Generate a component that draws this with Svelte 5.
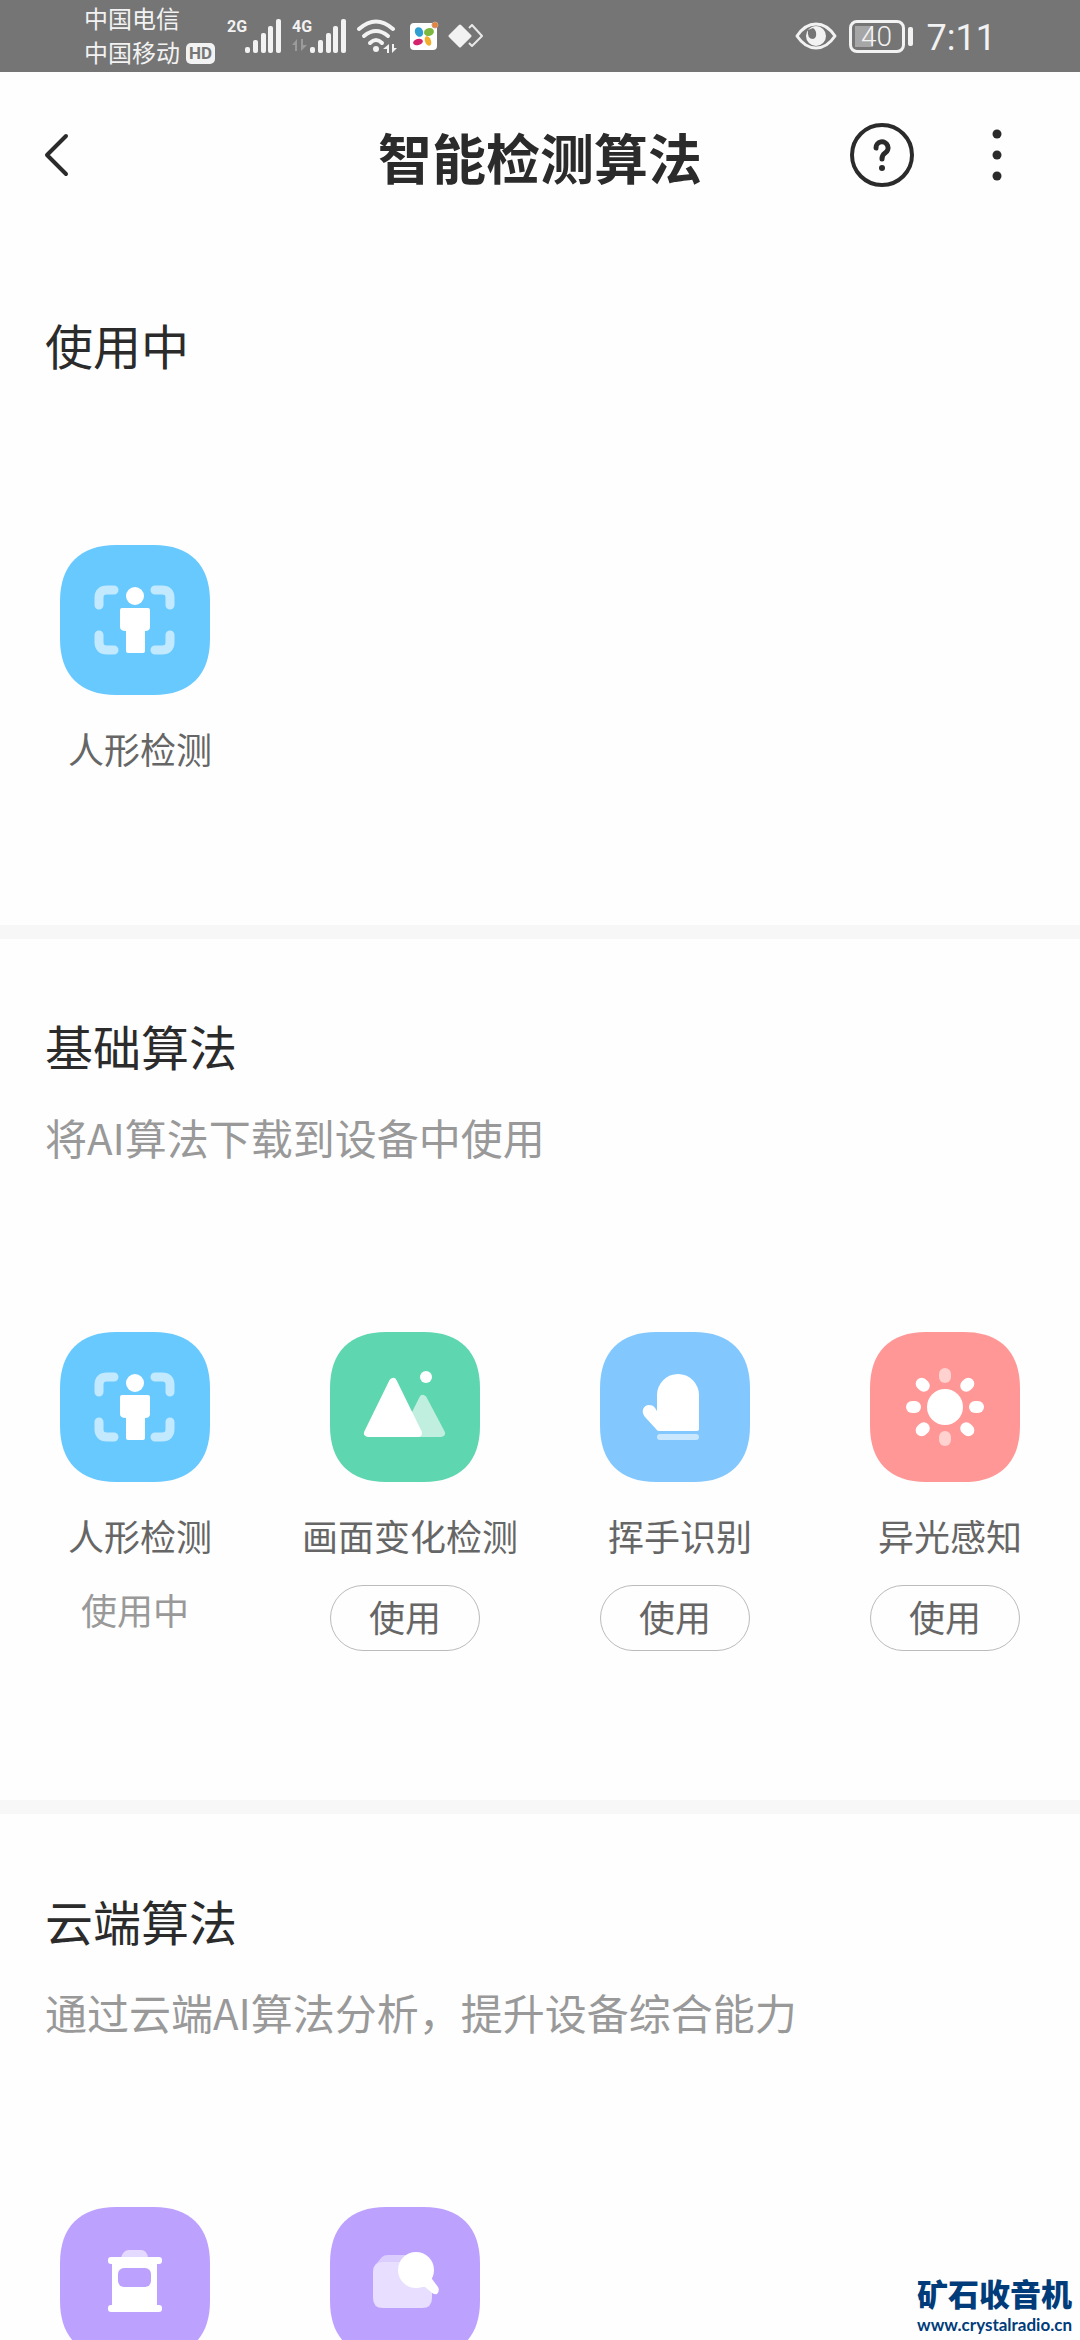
<script>
  const sections = [
    {
      title: '使用中',
      items: [{ icon: 'person', label: '人形检测' }]
    },
    {
      title: '基础算法',
      desc: '将AI算法下载到设备中使用',
      items: [
        { icon: 'person', label: '人形检测', state: '使用中' },
        { icon: 'scene', label: '画面变化检测', action: '使用' },
        { icon: 'mitten', label: '挥手识别', action: '使用' },
        { icon: 'sun', label: '异光感知', action: '使用' }
      ]
    },
    {
      title: '云端算法',
      desc: '通过云端AI算法分析，提升设备综合能力',
      items: [{ icon: 'bin' }, { icon: 'search' }]
    }
  ];

  const rays = [0, 45, 90, 135, 180, 225, 270, 315];
</script>

{#snippet signal()}
  <svg class="bars" width="37" height="34" viewBox="0 0 37 34" aria-hidden="true">
    <g fill="#f2f2f2">
      <rect x="0" y="28" width="5" height="6" rx="2" />
      <rect x="8" y="21" width="5" height="13" rx="2" />
      <rect x="16" y="14" width="5" height="20" rx="2" />
      <rect x="23" y="7" width="5" height="27" rx="2" />
      <rect x="31" y="0" width="5" height="34" rx="2" />
    </g>
  </svg>
{/snippet}

{#snippet tile(icon)}
  <svg class="tile {icon}" viewBox="0 0 150 150" aria-hidden="true">
    <path
      class="plate"
      d="M0 56C0 20 20 0 56 0H94C130 0 150 20 150 56V94C150 130 130 150 94 150H56C20 150 0 130 0 94Z"
    />
    {#if icon === 'person'}
      <g fill="none" stroke="#c3e9ff" stroke-width="9" stroke-linecap="round">
        <path d="M39 60V53Q39 45 47 45H54" />
        <path d="M95 45H102Q110 45 110 53V60" />
        <path d="M39 90V97Q39 105 47 105H54" />
        <path d="M95 105H102Q110 105 110 97V90" />
      </g>
      <circle cx="75" cy="51" r="9" fill="#fff" />
      <path
        fill="#fff"
        d="M62 63H88Q90 63 90 65V82Q90 86 85 86V106Q85 108 83 108H68Q66 108 66 106V86Q60 86 60 82V65Q60 63 62 63Z"
      />
    {:else if icon === 'scene'}
      <path d="M93 67L111 101H76Z" fill="#c0eedf" stroke="#c0eedf" stroke-width="8" stroke-linejoin="round" />
      <path d="M63 50L38 101H88Z" fill="#fff" stroke="#fff" stroke-width="8" stroke-linejoin="round" />
      <circle cx="96" cy="45" r="6" fill="#fff" />
    {:else if icon === 'mitten'}
      <path
        fill="#fff"
        d="M57 63A21 21 0 0 1 99 63V97Q99 99 97 99H59Q57 99 56 97L45 85C40 79 44 73 49 73C54 73 55 76 57 79Z"
      />
      <rect x="57" y="102" width="42" height="6" rx="3" fill="#c9e7ff" />
    {:else if icon === 'sun'}
      <circle cx="75" cy="75" r="18" fill="#fff" />
      {#each rays as angle}
        <rect
          x="69"
          y="36"
          width="12"
          height="15"
          rx="6"
          fill={angle % 180 === 0 ? '#ffd2d0' : '#fff'}
          transform="rotate({angle} 75 75)"
        />
      {/each}
    {:else if icon === 'bin'}
      <path d="M61 51Q63 43 69 43H81Q87 43 88 51Z" fill="#e4d9ff" />
      <rect x="48" y="50" width="54" height="7" rx="3" fill="#fff" />
      <rect x="48" y="98" width="54" height="7" rx="3" fill="#fff" />
      <rect x="52" y="53" width="45" height="50" fill="#fff" />
      <rect x="58" y="61" width="33" height="19" rx="6" fill="#bda1ff" />
    {:else}
      <path d="M47 56L52 50Q54 48 58 48H86V60H44Z" fill="#dccdff" />
      <path d="M53 55H92Q102 55 102 65V91Q102 101 92 101H53Q43 101 43 91V65Q43 55 53 55Z" fill="#e8deff" />
      <circle cx="86" cy="63" r="18" fill="#fff" />
      <path d="M94 65L102 64V72L108 80Q110 84 107 87Q104 88 101 85L95 80L86 80Z" fill="#fff" />
    {/if}
  </svg>
{/snippet}

<div class="screen">
  <div class="status">
    <div class="carriers">
      <span>中国电信</span>
      <span class="carrier">中国移动<b class="hd">HD</b></span>
    </div>
    <div class="signal first"><b>2G</b>{@render signal()}</div>
    <div class="signal">
      <span class="net">
        <b>4G</b>
        <svg width="15" height="12" viewBox="0 0 15 12" aria-hidden="true">
          <path d="M5 12V0L0 6H3V12ZM9 0V12L15 6H11V0Z" fill="#9b9b9b" />
        </svg>
      </span>
      {@render signal()}
    </div>
    <svg class="wifi" width="41" height="34" viewBox="0 0 41 34" aria-hidden="true">
      <g fill="none" stroke="#f2f2f2" stroke-width="4" stroke-linecap="round">
        <path d="M2 10Q19 -5 36 10" />
        <path d="M7 17Q19 7 31 17" />
        <path d="M13 24Q19 18 25 24" />
      </g>
      <circle cx="19" cy="30" r="3" fill="#f2f2f2" />
      <path d="M32 34V25L26 30H30V34ZM35 25V34L40 29H37V25Z" fill="#f2f2f2" />
    </svg>
    <svg class="app" width="29" height="30" viewBox="0 0 29 30" aria-hidden="true">
      <rect x="0" y="2" width="27" height="27" rx="4" fill="#fff" />
      <ellipse cx="9" cy="11" rx="4" ry="5" transform="rotate(-25 9 11)" fill="#2e9fd0" />
      <ellipse cx="19" cy="11" rx="5" ry="4" transform="rotate(-15 19 11)" fill="#7cb83f" />
      <ellipse cx="8" cy="21" rx="5" ry="3" transform="rotate(-15 8 21)" fill="#d3246c" />
      <ellipse cx="18" cy="20" rx="3" ry="5" transform="rotate(-20 18 20)" fill="#f3ae2b" />
      <circle cx="25" cy="4" r="3" fill="#e8823d" stroke="#c9a183" stroke-width="1" />
    </svg>
    <svg class="diamonds" width="36" height="24" viewBox="0 0 36 24" aria-hidden="true">
      <path d="M12 2L22 12L12 22L2 12Z" fill="#f2f2f2" stroke="#f2f2f2" stroke-width="3" stroke-linejoin="round" />
      <path d="M21 4L24 1L34 12L24 22L21 19" fill="none" stroke="#e8e8e8" stroke-width="2" stroke-linejoin="round" />
    </svg>
    <svg class="eye" width="42" height="28" viewBox="0 0 42 28" aria-hidden="true">
      <path d="M2 14Q10 2 21 2T40 14Q32 26 21 26T2 14Z" fill="none" stroke="#f2f2f2" stroke-width="3" stroke-linejoin="round" />
      <circle cx="21" cy="14" r="10" fill="#f2f2f2" />
      <path d="M13 8Q12 17 18 17Q22 16 21 10Q20 7 18 6Z" fill="#757575" />
    </svg>
    <div class="battery"><span>40</span></div>
    <time>7:11</time>
  </div>

  <header>
    <button class="back" aria-label="返回">
      <svg width="26" height="44" viewBox="0 0 26 44" aria-hidden="true">
        <path d="M23 3L4 22L23 41" fill="none" stroke="#2b2b2b" stroke-width="4" stroke-linecap="round" stroke-linejoin="round" />
      </svg>
    </button>
    <h1>智能检测算法</h1>
    <div class="tools">
      <button aria-label="帮助">
        <svg width="64" height="64" viewBox="0 0 64 64" aria-hidden="true">
          <circle cx="32" cy="32" r="30" fill="none" stroke="#2b2b2b" stroke-width="4" />
          <path d="M26 25A6 6 0 1 1 35 30Q32 32 32 36" fill="none" stroke="#2b2b2b" stroke-width="5" stroke-linecap="round" />
          <circle cx="32" cy="45" r="3" fill="#2b2b2b" />
        </svg>
      </button>
      <button aria-label="更多">
        <svg width="10" height="52" viewBox="0 0 10 52" aria-hidden="true">
          <g fill="#2b2b2b">
            <circle cx="5" cy="5" r="4.5" />
            <circle cx="5" cy="26" r="4.5" />
            <circle cx="5" cy="47" r="4.5" />
          </g>
        </svg>
      </button>
    </div>
  </header>

  <main>
    {#each sections as section}
      <section>
        <h2>{section.title}</h2>
        {#if section.desc}<p class="desc">{section.desc}</p>{/if}
        <ul>
          {#each section.items as item}
            <li>
              {@render tile(item.icon)}
              {#if item.label}<span class="label">{item.label}</span>{/if}
              {#if item.state}<span class="state">{item.state}</span>{/if}
              {#if item.action}
                <button class="use" aria-label="{item.action}{item.label}">{item.action}</button>
              {/if}
            </li>
          {/each}
        </ul>
      </section>
    {/each}
  </main>

  <div class="watermark">
    <strong>矿石收音机</strong>
    <span>www.crystalradio.cn</span>
  </div>
</div>

<style>
  :global(body) {
    background: #fff;
  }

  .screen {
    position: relative;
    height: 100vh;
    overflow: hidden;
    background: #fefefe;
    color: #2b2b2b;
    font-family: 'Noto Sans CJK SC', sans-serif;
  }

  button {
    padding: 0;
    border: 0;
    background: none;
    color: inherit;
    font-family: inherit;
  }

  svg {
    display: block;
    flex: none;
  }

  /* status bar */
  .status {
    display: flex;
    align-items: center;
    height: 72px;
    padding: 0 84px;
    background: #757575;
    color: #f2f2f2;
  }

  .carriers {
    display: flex;
    flex-direction: column;
    padding-bottom: 2px;
    font-size: 24px;
    line-height: 34px;
  }

  .carrier {
    display: flex;
    align-items: center;
    gap: 6px;
  }

  .hd {
    margin-top: 2px;
    padding: 0 3px;
    border-radius: 5px;
    background: #f2f2f2;
    color: #757575;
    font: bold 17px/21px Roboto, sans-serif;
  }

  .signal {
    display: flex;
    margin-left: 10px;
  }

  .signal b {
    display: block;
    width: 18px;
    font: bold 16px/16px Roboto, sans-serif;
  }

  .signal.first {
    margin-left: 12px;
  }

  .net {
    display: flex;
    flex-direction: column;
    gap: 4px;
  }

  .wifi {
    margin-left: 10px;
  }

  .app {
    margin-left: 12px;
  }

  .diamonds {
    margin-left: 9px;
  }

  .eye {
    margin-left: auto;
  }

  .battery {
    position: relative;
    box-sizing: border-box;
    width: 56px;
    height: 33px;
    margin: 0 22px 0 12px;
    border: 3px solid #f2f2f2;
    border-radius: 8px;
    background: linear-gradient(#a6a6a6, #a6a6a6) 3px 3px / 18px 21px no-repeat;
    font: 28px/28px Roboto, sans-serif;
    font-weight: 300;
    text-align: center;
  }

  .battery::after {
    content: '';
    position: absolute;
    top: 4px;
    right: -11px;
    width: 5px;
    height: 19px;
    border-radius: 2px;
    background: #f2f2f2;
  }

  time {
    padding-top: 4px;
    font: 36px/40px Roboto, sans-serif;
  }

  /* title bar */
  header {
    display: grid;
    grid-template-columns: 1fr auto 1fr;
    align-items: center;
    height: 166px;
    padding: 0 43px;
  }

  header h1 {
    margin: 0;
    padding-top: 4px;
    font-size: 54px;
    line-height: 72px;
    font-weight: 700;
  }

  .back {
    justify-self: start;
  }

  .tools {
    display: flex;
    align-items: center;
    justify-self: end;
    gap: 78px;
    padding-right: 35px;
  }

  /* sections */
  section {
    padding: 70px 0 149px;
  }

  section + section {
    border-top: 14px solid #f7f7f7;
  }

  h2 {
    margin: 0 45px;
    font-size: 48px;
    line-height: 72px;
    font-weight: 400;
  }

  .desc {
    margin: 26px 45px 0;
    color: #999;
    font-size: 42px;
    line-height: 60px;
  }

  ul {
    display: grid;
    grid-template-columns: repeat(4, 1fr);
    margin: 165px 0 0;
    padding: 0;
    list-style: none;
  }

  li {
    display: flex;
    flex-direction: column;
    align-items: center;
  }

  .tile {
    width: 150px;
    height: 150px;
  }

  .person .plate {
    fill: #68c9ff;
  }

  .scene .plate {
    fill: #5ed6af;
  }

  .mitten .plate {
    fill: #82c8ff;
  }

  .sun .plate {
    fill: #ff9797;
  }

  .bin .plate,
  .search .plate {
    fill: #bda1ff;
  }

  .label,
  .state,
  .use {
    font-size: 36px;
    line-height: 56px;
  }

  .label {
    margin-top: 25px;
    padding-left: 10px;
    color: #666;
    white-space: nowrap;
  }

  .state {
    margin-top: 18px;
    color: #999;
  }

  .use {
    box-sizing: border-box;
    width: 150px;
    height: 66px;
    margin-top: 22px;
    padding-bottom: 4px;
    border: 1px solid #bbb;
    border-radius: 33px;
    color: #666;
  }

  .watermark {
    position: absolute;
    right: 8px;
    bottom: 2px;
    display: flex;
    flex-direction: column;
    align-items: flex-end;
    gap: 3px;
    color: #003c7a;
  }

  .watermark strong {
    font-size: 31px;
    line-height: 32px;
    font-weight: 900;
  }

  .watermark span {
    font: bold 17px/26px Lato, sans-serif;
  }
</style>
